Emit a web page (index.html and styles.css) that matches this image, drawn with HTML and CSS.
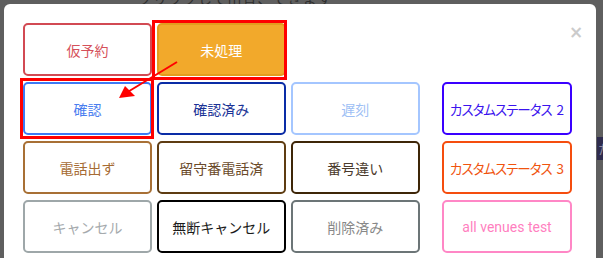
FILE: index.html
```html
<!DOCTYPE html>
<html lang="ja">
<head>
<meta charset="utf-8">
<link rel="stylesheet" href="styles.css">
</head>
<body>
<div class="behind-text">クリックして出音、できます</div>
<div class="side-tab">た</div>
<div class="modal">
  <div class="close">×</div>
  <div class="grid">
    <div class="btn s-kari">仮予約</div>
    <div class="btn s-mi">未処理</div>
    <div class="btn s-kaku c1">確認</div>
    <div class="btn s-kakuzumi">確認済み</div>
    <div class="btn s-chikoku">遅刻</div>
    <div class="btn s-c2 c5">カスタムステータス<span class="num">2</span></div>
    <div class="btn s-denwa c1">電話出ず</div>
    <div class="btn s-rusu">留守番電話済</div>
    <div class="btn s-bango">番号違い</div>
    <div class="btn s-c3 c5">カスタムステータス<span class="num">3</span></div>
    <div class="btn s-cancel c1">キャンセル</div>
    <div class="btn s-mudan">無断キャンセル</div>
    <div class="btn s-sakujo">削除済み</div>
    <div class="btn s-all c5">all venues test</div>
  </div>
</div>
<div class="hl hl-mi"></div>
<div class="hl hl-kaku"></div>
<svg class="arrow" width="603" height="258" viewBox="0 0 603 258">
  <line x1="177" y1="62" x2="126" y2="93" stroke="#ff0000" stroke-width="2"/>
  <polygon points="119,98 125,86 135,96" fill="#ff0000"/>
</svg>
</body>
</html>
```
FILE: styles.css
```css
html, body {
  margin: 0;
  padding: 0;
}
body {
  width: 603px;
  height: 258px;
  overflow: hidden;
  background: #5f5f5f;
  position: relative;
  font-family: "Noto Sans CJK JP", "Noto Sans", sans-serif;
}
.behind-text {
  position: absolute;
  left: 138px;
  top: -10px;
  font-size: 14px;
  line-height: 16px;
  color: #2e2e2e;
  letter-spacing: 1px;
}
.side-tab {
  position: absolute;
  left: 597px;
  top: 137px;
  width: 6px;
  height: 23px;
  overflow: hidden;
  background: #2f2c4e;
  color: #8a88a0;
  font-size: 13px;
  line-height: 23px;
  padding-left: 1px;
}
.modal {
  position: relative;
  margin: 4px 0 0 4px;
  width: 592px;
  height: 254px;
  background: #fff;
  border-radius: 6px 6px 0 0;
  box-sizing: border-box;
  padding: 19px 0 0 19px;
}
.close {
  position: absolute;
  left: 565px;
  top: 18px;
  font-size: 17px;
  line-height: 20px;
  font-weight: bold;
  color: #cbcbcb;
  font-family: "DejaVu Sans", sans-serif;
}
.grid {
  display: grid;
  grid-template-columns: 129px 129.5px 129.5px 13px 130px;
  grid-auto-rows: 53px;
  column-gap: 4.5px;
  row-gap: 6px;
}
.c1 { grid-column: 1; }
.c5 { grid-column: 5; }
.btn {
  box-sizing: border-box;
  border: 2px solid #000;
  border-radius: 5px;
  display: flex;
  align-items: center;
  justify-content: center;
  font-size: 14px;
  color: #222;
  background: #fff;
  white-space: nowrap;
}
.s-kari { border-color: #d24a53; color: #d5505a; }
.s-mi { border-color: #e39c1e; background: #f2a92b; color: #fff; }
.s-kaku { border-color: #3d7af5; color: #4a7eef; }
.s-kakuzumi { border-color: #0a2ca6; color: #1b3396; }
.s-chikoku { border-color: #a4c6ff; color: #9ebff5; }
.s-c2, .s-c3 {
  font-size: 13.5px;
  font-feature-settings: "palt" 1;
  letter-spacing: -1px;
}
.num {
  margin-left: 5px;
  letter-spacing: 0;
}
.s-c2 { border-color: #3a00ff; color: #3b14ee; }
.s-denwa { border-color: #a87035; color: #a66b33; }
.s-rusu { border-color: #5e3c12; color: #6a4a2a; }
.s-bango { border-color: #3e2608; color: #4a3a2c; }
.s-c3 { border-color: #f54d0e; color: #f0540f; }
.s-cancel { border-color: #9ea7a9; color: #a5aaad; }
.s-mudan { border-color: #000; color: #1a1a1a; }
.s-sakujo { border-color: #6c7577; color: #888; }
.s-all { border-color: #ff87c6; color: #ff7fbf; font-family: Roboto, "Noto Sans", sans-serif; }
.hl {
  position: absolute;
  border: 3px solid #ff0000;
  box-sizing: border-box;
}
.hl-mi { left: 152px; top: 20px; width: 135px; height: 60px; }
.hl-kaku { left: 20px; top: 78px; width: 134px; height: 61px; }
.arrow {
  position: absolute;
  left: 0;
  top: 0;
}
```
